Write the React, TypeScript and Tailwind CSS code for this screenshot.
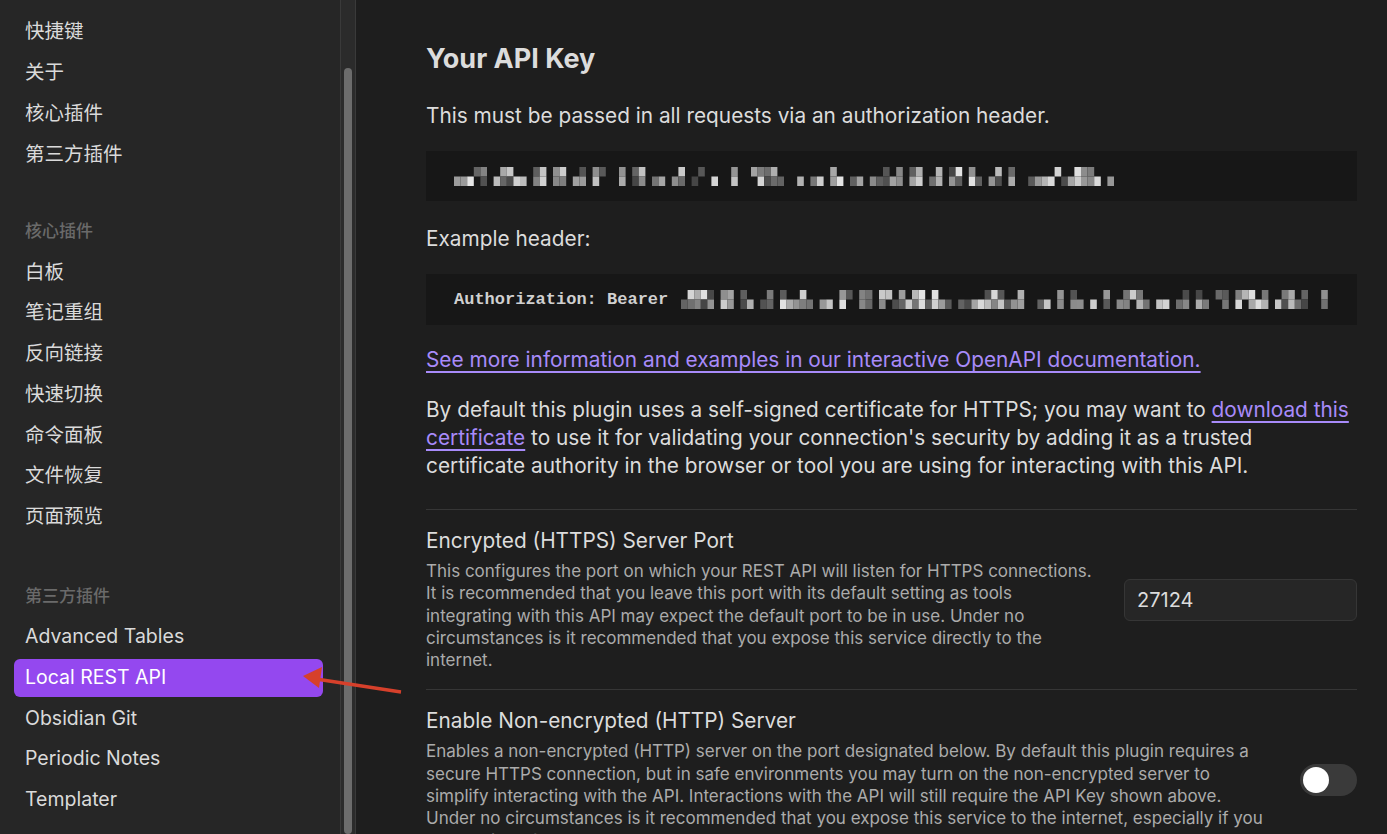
import React from "react";

const SANS = "font-['Inter','Noto_Sans_CJK_SC',sans-serif]";

const GROUPS = [
  { title: null, items: ["快捷键", "关于", "核心插件", "第三方插件"] },
  { title: "核心插件", items: ["白板", "笔记重组", "反向链接", "快速切换", "命令面板", "文件恢复", "页面预览"] },
  { title: "第三方插件", items: ["Advanced Tables", "Local REST API", "Obsidian Git", "Periodic Notes", "Templater"] },
];

// pixelated (redacted) key, drawn as blocks
function Redacted({ width, seed }: { width: number; seed: number }) {
  let s = seed;
  const rnd = () => {
    s = (s * 1103515245 + 12345) % 2147483648;
    return s / 2147483648;
  };
  const cell = 6.6;
  const cols = Math.floor(width / cell);
  const rects: React.ReactNode[] = [];
  for (let i = 0; i < cols; i++) {
    const gap = i % 3 === 2 && rnd() < 0.75;
    for (let r = 0; r < 2; r++) {
      if (gap) continue;
      const on = r === 1 ? rnd() < 0.85 : rnd() < 0.5;
      if (!on) continue;
      const v = Math.floor(70 + rnd() * 160);
      rects.push(
        <rect key={`${i}-${r}`} x={i * cell} y={r * 9.5} width={cell} height={9.5} fill={`rgb(${v},${v},${v})`} />
      );
    }
  }
  return (
    <svg width={width} height={19} className="block shrink-0">
      {rects}
    </svg>
  );
}

export default function App() {
  return (
    <div className={`relative flex h-[834px] w-[1387px] overflow-hidden bg-[#1e1e1e] ${SANS}`}>
      {/* Sidebar */}
      <div className="flex w-[340px] shrink-0 flex-col bg-[#262626] pl-[14px] pr-[17px] pt-[13px]">
        {GROUPS.map((g, gi) => (
          <div key={gi} className={`shrink-0 ${gi === 1 ? "mt-[48px]" : gi === 2 ? "mt-[50px]" : ""}`}>
            {g.title && (
              <div className="mb-[12px] pl-[11px] text-[17px] leading-[20px] font-medium text-[#6a6a6a]">{g.title}</div>
            )}
            <div className="flex flex-col gap-[2.75px]">
              {g.items.map(it => (
                <div
                  key={it}
                  className={`flex h-[38px] shrink-0 items-center rounded-[6px] px-[11px] text-[19.5px] ${
                    it === "Local REST API" ? "bg-[#9448ef] text-white" : "text-[#dadada]"
                  }`}
                >
                  {it}
                </div>
              ))}
            </div>
          </div>
        ))}
      </div>

      {/* Scrollbar */}
      <div className="flex w-[16px] shrink-0 justify-center border-x border-[#3a3a3a] bg-[#2b2b2b] pt-[68px]">
        <div className="h-full w-[8px] rounded-full bg-[#6c6c6c]" />
      </div>

      {/* Main */}
      <div className="min-w-0 flex-1 pl-[70px] pr-[30px] pt-[42px] text-[#dcdcdc]">
        <h1 className="text-[27px] leading-[34px] font-bold">Your API Key</h1>
        <p className="mt-[26px] text-[20.8px] leading-[28px]">
          This must be passed in all requests via an authorization header.
        </p>
        <div className="mt-[21px] flex h-[50px] items-center bg-[#171717] px-[28px]">
          <Redacted width={663} seed={7} />
        </div>
        <p className="mt-[24px] text-[20.8px] leading-[28px]">Example header:</p>
        <div className="mt-[21px] flex h-[51px] items-center gap-[13px] overflow-hidden bg-[#171717] px-[28px]">
          <span className="shrink-0 whitespace-nowrap font-['Liberation_Mono',monospace] text-[17px] font-bold text-[#d0d0d0]">
            Authorization: Bearer
          </span>
          <Redacted width={658} seed={31} />
        </div>
        <a className="mt-[21px] block text-[20.8px] leading-[28px] text-[#a88bfa] underline underline-offset-[4px]">
          See more information and examples in our interactive OpenAPI documentation.
        </a>
        <p className="mt-[22px] text-[20.8px] leading-[28px]">
          By default this plugin uses a self-signed certificate for HTTPS; you may want to{" "}
          <a className="text-[#a88bfa] underline underline-offset-[4px]">download this certificate</a> to use it for
          validating your connection's security by adding it as a trusted certificate authority in the browser or tool
          you are using for interacting with this API.
        </p>

        <div className="mt-[29px] flex items-center gap-[24px] border-t border-[#363636] pt-[18px] pb-[18px]">
          <div className="min-w-0 flex-1">
            <div className="text-[20.8px] leading-[26px]">Encrypted (HTTPS) Server Port</div>
            <div className="mt-[6px] text-[17px] leading-[22.3px] text-[#ababab]">
              This configures the port on which your REST API will listen for HTTPS connections. It is recommended that
              you leave this port with its default setting as tools integrating with this API may expect the default
              port to be in use. Under no circumstances is it recommended that you expose this service directly to the
              internet.
            </div>
          </div>
          <div className="flex h-[42px] w-[233px] shrink-0 items-center rounded-[6px] border border-[#363636] bg-[#262626] px-[12px] text-[20px] text-[#dcdcdc]">
            27124
          </div>
        </div>

        <div className="flex items-center gap-[28px] border-t border-[#363636] pt-[18px]">
          <div className="min-w-0 flex-1">
            <div className="text-[20.8px] leading-[26px]">Enable Non-encrypted (HTTP) Server</div>
            <div className="mt-[6px] text-[17px] leading-[22.3px] text-[#ababab]">
              Enables a non-encrypted (HTTP) server on the port designated below. By default this plugin requires a
              secure HTTPS connection, but in safe environments you may turn on the non-encrypted server to simplify
              interacting with the API. Interactions with the API will still require the API Key shown above. Under no
              circumstances is it recommended that you expose this service to the internet, especially if you are
              outside of a secure network.
            </div>
          </div>
          <div className="flex h-[32px] w-[57px] shrink-0 items-center rounded-full bg-[#3a3a3a] px-[3px]">
            <div className="h-[26px] w-[26px] rounded-full bg-white" />
          </div>
        </div>
      </div>

      {/* annotation arrow */}
      <svg className="pointer-events-none absolute left-0 top-0" width={1387} height={834}>
        <line x1={401} y1={692} x2={316} y2={679} stroke="#d6402b" strokeWidth={3.5} />
        <polygon points="303,676 322,667 319,688" fill="#d6402b" />
      </svg>
    </div>
  );
}
